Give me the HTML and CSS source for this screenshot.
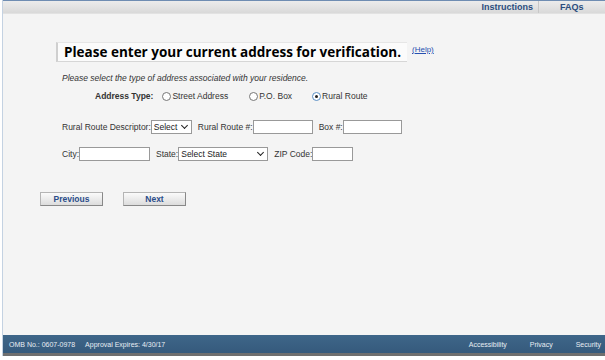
FILE: index.html
```html
<!DOCTYPE html>
<html lang="en">
<head>
<meta charset="utf-8">
<title>Address Verification</title>
<link rel="stylesheet" href="styles.css">
</head>
<body>
<div class="page">
  <div class="topnav">
    <a href="#" class="navlink">Instructions</a>
    <a href="#" class="navlink last">FAQs</a>
  </div>

  <main class="content">
    <div class="headrow">
      <h1 class="heading">Please enter your current address for verification.</h1>
      <a href="#" class="help">(Help)</a>
    </div>

    <p class="intro">Please select the type of address associated with your residence.</p>

    <div class="typerow">
      <span class="typelabel">Address Type:</span>
      <label class="radio"><span class="dot"></span>Street Address</label>
      <label class="radio"><span class="dot"></span>P.O. Box</label>
      <label class="radio"><span class="dot on"></span>Rural Route</label>
    </div>

    <div class="fieldrow">
      <label>Rural Route Descriptor:</label>
      <span class="sel w-desc">Select</span>
      <label class="gap">Rural Route #:</label>
      <span class="inp w-rr"></span>
      <label class="gap">Box #:</label>
      <span class="inp w-box"></span>
    </div>

    <div class="fieldrow">
      <label>City:</label>
      <span class="inp w-city"></span>
      <label class="gap">State:</label>
      <span class="sel w-state">Select State</span>
      <label class="gap">ZIP Code:</label>
      <span class="inp w-zip"></span>
    </div>

    <div class="buttons">
      <button class="btn">Previous</button>
      <button class="btn">Next</button>
    </div>
  </main>

  <footer class="footer">
    <div class="footleft">
      <span>OMB No.: 0607-0978</span>
      <span>Approval Expires: 4/30/17</span>
    </div>
    <div class="footright">
      <a href="#">Accessibility</a>
      <a href="#">Privacy</a>
      <a href="#">Security</a>
    </div>
  </footer>
</div>
</body>
</html>
```

FILE: styles.css
```css
body {
    margin: 0;
    background: #fff;
    font-family: "Liberation Sans", Arial, sans-serif;
    color: #333;
}
.page {
    width: 602px;
    margin-left: 2px;
    background: #f4f4f4;
    border-left: 1px solid #c4d2e2;
    display: flex;
    flex-direction: column;
    height: 356px;
}
.topnav {
    height: 12px;
    border-top: 1px solid #6f8db2;
    background: linear-gradient(#ececec, #d9d9d9);
    display: flex;
    justify-content: flex-end;
    border-bottom: 1px solid #e2e2e2;
}
.navlink {
    font-size: 9px;
    font-weight: bold;
    color: #2b4d7e;
    text-decoration: none;
    line-height: 12px;
    padding: 0 5px 0 0;
    width: 60px;
    text-align: right;
    border-right: 1px solid #c8c8c8;
}
.navlink.last {
    border-right: none;
    width: 40px;
    text-align: left;
    padding-left: 21px;
}

.content {
    flex: 1;
    padding: 28px 0 0 53px;
    font-size: 8.5px;
}
.headrow {
    display: flex;
    align-items: flex-start;
}
.heading {
    margin: 0;
    font-family: "Open Sans", sans-serif;
    font-weight: bold;
    font-size: 13.5px;
    color: #000;
    line-height: 17px;
    padding: 1px 6px 0 6px;
    background: #fbfbfb;
    border-top: 1px solid #e6e6e6;
    border-left: 2px solid #cfcfcf;
    border-bottom: 1px solid #d6d6d6;
    letter-spacing: 0;
}
.help {
    font-size: 8px;
    color: #2650b0;
    margin: 3px 0 0 5px;
}
.intro {
    margin: 11px 0 0 6px;
    font-style: italic;
    font-size: 8.5px;
}
.typerow {
    display: flex;
    align-items: center;
    margin: 8px 0 0 39px;
}
.typelabel {
    font-weight: bold;
    margin-right: 9px;
}
.radio {
    display: flex;
    align-items: center;
    margin-right: 21px;
}
.radio:nth-of-type(2) {
    margin-right: 20px;
}
.dot {
    width: 7px;
    height: 7px;
    border: 1px solid #777;
    border-radius: 50%;
    background: #fff;
    margin-right: 1px;
    position: relative;
}
.dot.on {
    border-color: #5a8fc4;
}
.dot.on::after {
    content: "";
    position: absolute;
    left: 2px;
    top: 2px;
    width: 3px;
    height: 3px;
    border-radius: 50%;
    background: #222;
}

.fieldrow {
    display: flex;
    align-items: center;
    margin: 19px 0 0 6px;
}
.fieldrow + .fieldrow {
    margin-top: 13px;
}
.gap {
    margin-left: 6px;
}
.inp, .sel {
    height: 12px;
    border: 1px solid #999;
    background: #fff;
    box-sizing: content-box;
}
.sel {
    position: relative;
    line-height: 12px;
    padding-left: 2px;
    color: #222;
}
.sel::after {
    content: "";
    position: absolute;
    right: 4px;
    top: 2px;
    width: 4px;
    height: 4px;
    border-right: 1.5px solid #222;
    border-bottom: 1.5px solid #222;
    transform: rotate(45deg);
}
.w-desc { width: 37px; }
.w-rr { width: 58px; }
.w-box { width: 57px; }
.w-city { width: 69px; }
.w-state { width: 86px; }
.w-zip { width: 39px; }

.buttons {
    display: flex;
    gap: 20px;
    margin: 31px 0 0 -16px;
}
.btn {
    width: 63px;
    height: 14px;
    padding: 0;
    font-family: "Liberation Sans", Arial, sans-serif;
    font-size: 8.5px;
    font-weight: bold;
    color: #2b4d8a;
    background: linear-gradient(#fafafa, #dcdcdc);
    border: 1px solid #b4b4b4;
    border-right-color: #888;
    border-bottom-color: #888;
}

.footer {
    height: 18px;
    background: linear-gradient(#3e6689, #355a7c);
    border-bottom: 3px solid #6f6f6f;
    display: flex;
    justify-content: space-between;
    align-items: center;
    font-size: 7px;
    color: #e8eef4;
    padding: 0 4px 0 6px;
}
.footleft span + span {
    margin-left: 8px;
}
.footright a {
    color: #e8eef4;
    text-decoration: none;
    margin-left: 21px;
}
```
